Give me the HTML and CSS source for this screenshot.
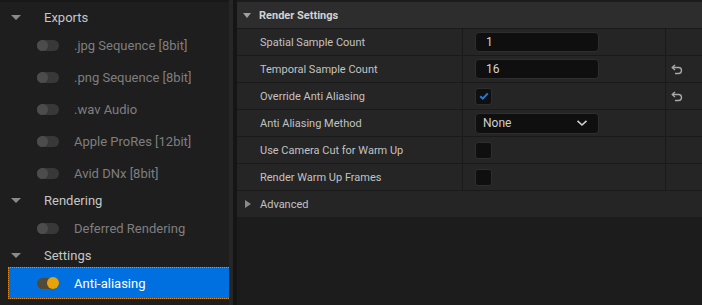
FILE: index.html
```html
<!DOCTYPE html>
<html>
<head>
<meta charset="utf-8">
<link rel="stylesheet" href="styles.css">
</head>
<body>
<div class="app">
  <div class="left">
    <div class="list">
      <div class="cat"><span class="tri-down"></span><span class="cat-label">Exports</span></div>
      <div class="item"><span class="toggle"><span class="knob"></span></span><span class="item-label">.jpg Sequence [8bit]</span></div>
      <div class="item"><span class="toggle"><span class="knob"></span></span><span class="item-label">.png Sequence [8bit]</span></div>
      <div class="item"><span class="toggle"><span class="knob"></span></span><span class="item-label">.wav Audio</span></div>
      <div class="item"><span class="toggle"><span class="knob"></span></span><span class="item-label">Apple ProRes [12bit]</span></div>
      <div class="item"><span class="toggle"><span class="knob"></span></span><span class="item-label">Avid DNx [8bit]</span></div>
      <div class="cat"><span class="tri-down"></span><span class="cat-label">Rendering</span></div>
      <div class="item"><span class="toggle"><span class="knob"></span></span><span class="item-label">Deferred Rendering</span></div>
      <div class="cat"><span class="tri-down"></span><span class="cat-label">Settings</span></div>
      <div class="item selected"><span class="toggle on"><span class="knob"></span></span><span class="item-label">Anti-aliasing</span></div>
    </div>
  </div>
  <div class="splitter"><span class="split-a"></span><span class="split-b"></span></div>
  <div class="right">
    <div class="header"><span class="tri-down small"></span><span class="header-label">Render Settings</span></div>
    <div class="row">
      <div class="name">Spatial Sample Count</div>
      <div class="value"><div class="numbox">1</div></div>
      <div class="reset"></div>
    </div>
    <div class="row">
      <div class="name">Temporal Sample Count</div>
      <div class="value"><div class="numbox">16</div></div>
      <div class="reset"><svg class="reset-icon" width="14" height="12" viewBox="0 0 14 12"><path d="M2.5 3.5 H8.5 A3 3 0 0 1 8.5 9.5 H5" fill="none" stroke="#a8a8a8" stroke-width="1.4"/><path d="M5 1 L2.3 3.5 L5 6" fill="none" stroke="#a8a8a8" stroke-width="1.4"/></svg></div>
    </div>
    <div class="row">
      <div class="name">Override Anti Aliasing</div>
      <div class="value"><div class="check"><svg width="12" height="10" viewBox="0 0 12 10"><path d="M2.2 5.2 L4.8 7.6 L9.8 2.4" fill="none" stroke="#1f7ae6" stroke-width="2"/></svg></div></div>
      <div class="reset"><svg class="reset-icon" width="14" height="12" viewBox="0 0 14 12"><path d="M2.5 3.5 H8.5 A3 3 0 0 1 8.5 9.5 H5" fill="none" stroke="#a8a8a8" stroke-width="1.4"/><path d="M5 1 L2.3 3.5 L5 6" fill="none" stroke="#a8a8a8" stroke-width="1.4"/></svg></div>
    </div>
    <div class="row">
      <div class="name">Anti Aliasing Method</div>
      <div class="value"><div class="combo"><span>None</span><svg width="12" height="8" viewBox="0 0 12 8"><path d="M1.5 1.8 L6 6 L10.5 1.8" fill="none" stroke="#d0d0d0" stroke-width="1.6"/></svg></div></div>
      <div class="reset"></div>
    </div>
    <div class="row">
      <div class="name">Use Camera Cut for Warm Up</div>
      <div class="value"><div class="check"></div></div>
      <div class="reset"></div>
    </div>
    <div class="row">
      <div class="name">Render Warm Up Frames</div>
      <div class="value"><div class="check"></div></div>
      <div class="reset"></div>
    </div>
    <div class="adv"><span class="tri-right"></span><span class="adv-label">Advanced</span></div>
  </div>
</div>
</body>
</html>
```
FILE: styles.css
```css
html, body {
  margin: 0;
  padding: 0;
  background: #1b1b1b;
  font-family: Roboto, "Liberation Sans", sans-serif;
}
.app {
  display: flex;
  width: 702px;
  height: 305px;
  overflow: hidden;
}
.left {
  width: 229px;
  background: #1e1e1e;
  border-top: 2px solid #181818;
  box-sizing: border-box;
  padding-top: 4px;
}
.list {
  display: flex;
  flex-direction: column;
  padding-left: 8px;
}
.cat {
  height: 23px;
  display: flex;
  align-items: center;
}
.tri-down {
  width: 0;
  height: 0;
  border-left: 5px solid transparent;
  border-right: 5px solid transparent;
  border-top: 5px solid #8a8a8a;
  margin-left: 3px;
}
.cat-label {
  margin-left: 23px;
  font-size: 13px;
  color: #c6c6c6;
}
.item {
  height: 32px;
  display: flex;
  align-items: center;
  box-sizing: border-box;
}
.toggle {
  width: 22px;
  height: 11px;
  border-radius: 6px;
  background: #383838;
  margin-left: 29px;
  display: flex;
  align-items: center;
}
.knob {
  width: 11px;
  height: 11px;
  border-radius: 50%;
  background: #4c4c4c;
}
.toggle.on {
  background: #534a36;
  justify-content: flex-end;
}
.toggle.on .knob {
  width: 12px;
  height: 12px;
  background: #e6a40b;
}
.item-label {
  margin-left: 15px;
  font-size: 13px;
  color: #7e7e7e;
}
.item.selected {
  background: #0070e0;
  border-top: 1px dotted #e68a1a;
  border-bottom: 1px dotted #e68a1a;
  border-left: 1px dotted #e68a1a;
}
.item.selected .toggle {
  margin-left: 28px;
}
.item.selected .item-label {
  color: #ffffff;
  margin-left: 15px;
}
.splitter {
  display: flex;
  width: 8px;
}
.split-a {
  width: 4px;
  background: #262626;
}
.split-b {
  width: 4px;
  background: #151515;
}
.right {
  flex: 1;
  background: #1c1c1c;
  padding-top: 2px;
}
.header {
  height: 26px;
  background: #2d2d2d;
  border-bottom: 1px solid #1a1a1a;
  display: flex;
  align-items: center;
}
.tri-down.small {
  margin-left: 6px;
  border-left-width: 4.5px;
  border-right-width: 4.5px;
  border-top-width: 5px;
  border-top-color: #a0a0a0;
}
.header-label {
  margin-left: 8px;
  font-size: 11px;
  font-weight: bold;
  color: #d2d2d2;
}
.row {
  display: grid;
  grid-template-columns: 226px 203px 1fr;
  height: 26px;
  background: #252525;
  border-bottom: 1px solid #1a1a1a;
}
.name {
  border-right: 1px solid #1a1a1a;
  display: flex;
  align-items: center;
  padding-left: 23px;
  font-size: 11px;
  color: #c2c2c2;
}
.value {
  border-right: 1px solid #1a1a1a;
  display: flex;
  align-items: center;
  padding-left: 12px;
}
.reset {
  display: flex;
  align-items: center;
  padding-left: 4px;
}
.reset-icon {
  margin-top: 1px;
}
.numbox {
  width: 124px;
  height: 20px;
  box-sizing: border-box;
  background: #0f0f0f;
  border: 1px solid #2e2e2e;
  border-radius: 4px;
  font-size: 12px;
  color: #d4d4d4;
  display: flex;
  align-items: center;
  padding-left: 10px;
}
.combo {
  width: 124px;
  height: 21px;
  box-sizing: border-box;
  background: #0f0f0f;
  border: 1px solid #2e2e2e;
  border-radius: 4px;
  font-size: 12px;
  color: #d0d0d0;
  display: flex;
  align-items: center;
  justify-content: space-between;
  padding-left: 7px;
  padding-right: 10px;
}
.check {
  width: 17px;
  height: 17px;
  box-sizing: border-box;
  background: #0f0f0f;
  border: 1px solid #2e2e2e;
  border-radius: 3px;
  display: flex;
  align-items: center;
  justify-content: center;
}
.adv {
  height: 26px;
  background: #252525;
  display: flex;
  align-items: center;
}
.tri-right {
  width: 0;
  height: 0;
  border-top: 4.5px solid transparent;
  border-bottom: 4.5px solid transparent;
  border-left: 6px solid #8a8a8a;
  margin-left: 8px;
}
.adv-label {
  margin-left: 9px;
  font-size: 11px;
  color: #c2c2c2;
}
```
